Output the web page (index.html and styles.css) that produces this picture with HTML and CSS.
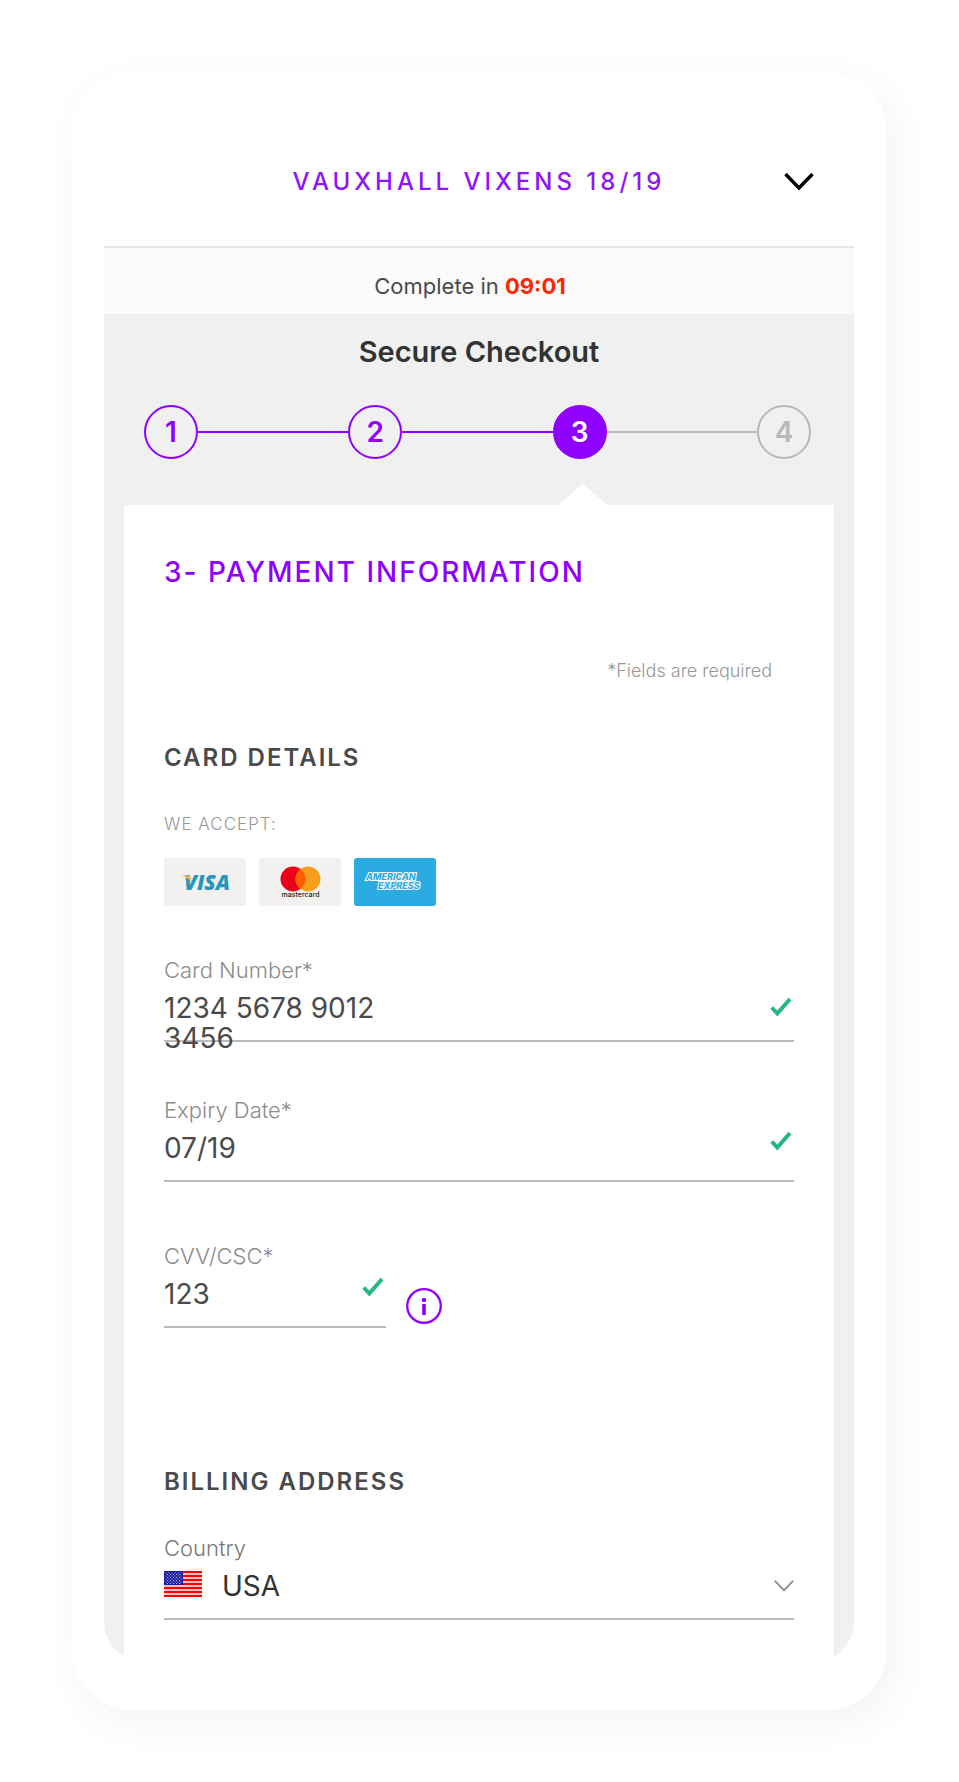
FILE: index.html
```html
<!DOCTYPE html>
<html lang="en">
<head>
<meta charset="utf-8">
<meta name="viewport" content="width=device-width, initial-scale=1">
<title>Secure Checkout</title>
<link rel="stylesheet" href="styles.css">
</head>
<body>
<svg class="sprite" aria-hidden="true">
  <symbol id="check" viewBox="0 0 22 20"><path d="M1.8 10.5 7.3 16.6 20 2" fill="none" stroke="#26b58a" stroke-width="4"/></symbol>
</svg>
<div class="phone">
  <header class="header">
    <p class="event">VAUXHALL VIXENS 18/19</p>
    <button class="toggle" type="button" aria-label="Show event details">
      <svg width="30" height="18" viewBox="0 0 30 18"><path d="M1.5 1 15 15 28.500 1" fill="none" stroke="#000" stroke-width="3.400"/></svg>
    </button>
  </header>
  <main class="screen">
    <p class="timer">Complete in <strong>09:01</strong></p>
    <h1 class="title">Secure Checkout</h1>
    <ol class="steps">
      <li class="step">1</li>
      <li class="track" role="presentation"></li>
      <li class="step">2</li>
      <li class="track" role="presentation"></li>
      <li class="step step-current" aria-current="step">3</li>
      <li class="track track-todo" role="presentation"></li>
      <li class="step step-todo">4</li>
    </ol>
    <form class="panel">
      <h2 class="panel-title">3- PAYMENT INFORMATION</h2>
      <p class="required">*Fields are required</p>

      <h3 class="section">CARD DETAILS</h3>
      <p class="accept">WE ACCEPT:</p>
      <div class="brands">
        <svg class="brand" viewBox="0 0 82 48" role="img" aria-label="Visa">
          <rect width="82" height="48" rx="3" fill="#f2f1ef"/>
          <text class="visa" x="43" y="32" text-anchor="middle">VISA</text>
          <path d="M17 17.500h7q2.500 0 3 2.500l1.300 6Q25 19 17 17.500z" fill="#f4b64e"/>
        </svg>
        <svg class="brand" viewBox="0 0 82 48" role="img" aria-label="Mastercard">
          <rect width="82" height="48" rx="3" fill="#f2f1ef"/>
          <circle cx="34" cy="21" r="12.500" fill="#eb001b"/>
          <circle cx="49" cy="21" r="12.500" fill="#f79e1b"/>
          <path d="M41.500 11a12.500 12.500 0 0 1 0 20 12.500 12.500 0 0 1 0-20z" fill="#ff5f00"/>
          <text class="mastercard" x="41.500" y="39" text-anchor="middle">mastercard</text>
        </svg>
        <svg class="brand" viewBox="0 0 82 48" role="img" aria-label="American Express">
          <rect width="82" height="48" rx="3" fill="#2aace3"/>
          <g class="amex">
            <text x="12" y="22">AMERICAN</text>
            <text x="24" y="31">EXPRESS</text>
          </g>
        </svg>
      </div>

      <div class="field">
        <label class="label" for="number">Card Number*</label>
        <div class="row row-multi">
          <textarea class="value value-number" id="number" rows="2">1234 5678 9012 3456</textarea>
          <svg class="tick"><use href="#check"/></svg>
        </div>
      </div>
      <div class="field">
        <label class="label" for="expiry">Expiry Date*</label>
        <div class="row">
          <input class="value" id="expiry" type="text" value="07/19">
          <svg class="tick"><use href="#check"/></svg>
        </div>
      </div>
      <div class="cvv">
        <div class="field field-short">
          <label class="label" for="cvv">CVV/CSC*</label>
          <div class="row">
            <input class="value" id="cvv" type="text" value="123">
            <svg class="tick"><use href="#check"/></svg>
          </div>
        </div>
        <button class="info" type="button" aria-label="What is a CVV?">
          <svg width="36" height="36" viewBox="0 0 36 36" fill="#8f00ff"><circle cx="18" cy="18" r="16.800" fill="none" stroke="#8f00ff" stroke-width="2.300"/><circle cx="18" cy="12" r="2.200"/><path d="M16.200 16h3.600v11h-3.600z"/></svg>
        </button>
      </div>

      <h3 class="section section-billing">BILLING ADDRESS</h3>
      <div class="field field-country">
        <label class="label label-dark" for="country">Country</label>
        <div class="row">
          <svg class="flag" viewBox="0 0 38 26" aria-hidden="true">
            <defs><pattern id="stars" width="3" height="3" patternUnits="userSpaceOnUse"><rect width="3" height="3" fill="#1a1a9c"/><path d="M0 0h1v1H0zM1.500 1.500h1v1h-1z" fill="#b9b9ee"/></pattern></defs>
            <rect width="38" height="26" fill="#fff"/>
            <path d="M0 1h38M0 5h38M0 9h38M0 13h38M0 17h38M0 21h38M0 25h38" stroke="#f00" stroke-width="2.500"/>
            <rect width="19" height="14" fill="#1a1a9c"/>
            <rect x="1" y="1" width="17" height="12" fill="url(#stars)"/>
          </svg>
          <select class="value value-country" id="country"><option>USA</option></select>
          <svg class="caret" width="20" height="12" viewBox="0 0 20 12" aria-hidden="true"><path d="M.8.8 10 10.300 19.200.8" fill="none" stroke="#979797" stroke-width="2"/></svg>
        </div>
      </div>
    </form>
  </main>
</div>
</body>
</html>
```
FILE: styles.css
```css
* { box-sizing: border-box; }

body {
  margin: 0;
  padding: 72px;
  background: #fff;
  color: #4a4a4a;
  font-family: Inter, "Liberation Sans", sans-serif;
}

h1, h2, h3, p, ol { margin: 0; padding: 0; }

button { border: 0; padding: 0; background: none; cursor: pointer; }
svg { display: block; flex: none; }
.sprite { position: absolute; width: 0; height: 0; }

.phone {
  padding: 0 33px 48px 32px;
  border-radius: 60px;
  background: #fff;
  box-shadow: 8px 12px 44px rgba(0, 0, 0, .05);
}

.header {
  display: grid;
  grid-template-columns: 1fr auto 1fr;
  align-items: center;
  padding: 94px 40px 48px;
  border-bottom: 2px solid #e6e6e6;
}
.event {
  grid-column: 2;
  color: #9013fe;
  font-size: 24px;
  font-weight: 500;
  line-height: 32px;
  letter-spacing: 4px;
}
.toggle { justify-self: end; }

.screen {
  overflow: hidden;
  border-radius: 0 0 40px 40px;
  background: #f0f0f0;
}

.timer {
  padding: 22px 18px 12px 0;
  background: #fafafa;
  font-size: 22px;
  line-height: 32px;
  text-align: center;
}
.timer strong { color: #ff2600; font-weight: 700; }

.title {
  padding-top: 20px;
  color: #333;
  font-size: 29px;
  font-weight: 600;
  line-height: 36px;
  text-align: center;
}

.steps {
  display: flex;
  align-items: center;
  padding: 35px 43px 46px 40px;
  list-style: none;
}
.step {
  position: relative;
  flex: none;
  width: 54px;
  height: 54px;
  border: 2px solid #8f00ff;
  border-radius: 50%;
  color: #8f00ff;
  font-size: 28px;
  font-weight: 600;
  line-height: 50px;
  text-align: center;
}
.step-current { background: #8f00ff; color: #fff; }
.step-current::after {
  content: "";
  position: absolute;
  top: 77px;
  left: 50%;
  width: 52px;
  height: 22px;
  margin-left: -23px;
  background: #fff;
  clip-path: polygon(0 100%, 50% 0, 100% 100%);
}
.step-todo { border-color: #b8b8b8; color: #b8b8b8; }
.track { flex: 1; height: 2px; background: #8f00ff; }
.track-todo { background: #b8b8b8; }

.panel {
  margin: 0 20px;
  padding: 49px 40px 42px;
  background: #fff;
}
.panel-title {
  color: #8f00ff;
  font-size: 28px;
  font-weight: 500;
  line-height: 36px;
  letter-spacing: 2px;
}
.required {
  margin-top: 69px;
  padding-right: 22px;
  color: #979797;
  font-size: 18px;
  font-weight: 300;
  line-height: 24px;
  text-align: right;
}
.section {
  margin-top: 61px;
  font-size: 24px;
  font-weight: 600;
  line-height: 28px;
  letter-spacing: 2px;
}
.section-billing { margin-top: 140px; }
.accept {
  margin-top: 40px;
  color: #979797;
  font-size: 17px;
  font-weight: 300;
  line-height: 24px;
  letter-spacing: 1px;
}

.brands { display: flex; gap: 13px; margin-top: 22px; }
.brand { width: 82px; height: 48px; }
.visa { fill: #2596be; font: italic 800 21px "Open Sans", sans-serif; }
.mastercard { fill: #231f20; font: 500 7px Inter, sans-serif; }
.amex {
  fill: #2aace3;
  stroke: #fff;
  stroke-width: 2px;
  paint-order: stroke;
  font: italic 800 9px Inter, sans-serif;
}

.field { margin-top: 54px; }
.brands + .field { margin-top: 50px; }
.label {
  display: block;
  color: #8c8c8c;
  font-size: 22px;
  font-weight: 300;
  line-height: 28px;
}
.label-dark { color: #777; }
.row {
  display: flex;
  align-items: flex-start;
  justify-content: space-between;
  height: 58px;
  padding-top: 9px;
  border-bottom: 2px solid #bababa;
}
.value {
  flex: 1;
  min-width: 0;
  height: 30px;
  margin: 0;
  padding: 0;
  border: 0;
  background: none;
  color: #4a4a4a;
  font: 400 28px/30px Inter, "Liberation Sans", sans-serif;
  appearance: none;
  resize: none;
}
.value-number { flex: none; width: 250px; height: 60px; overflow: hidden; }
.tick { width: 22px; height: 20px; margin: -2px 2px 0 0; }
.row-multi .tick { margin-top: 4px; }

.cvv { display: flex; align-items: flex-end; gap: 20px; margin-top: 60px; }
.field-short { width: 222px; margin-top: 0; }
.info { margin-bottom: 4px; }

.field-country { margin-top: 38px; }
.field-country .row { gap: 20px; }
.flag { width: 38px; height: 26px; }
.value-country { color: #333; }
.caret { margin-top: 9px; }
```
